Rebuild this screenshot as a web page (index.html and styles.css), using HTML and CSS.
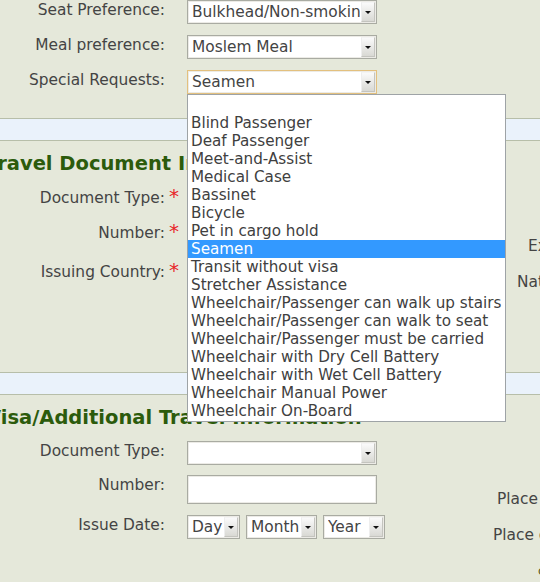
FILE: index.html
```html
<!DOCTYPE html>
<html>
<head>
<meta charset="utf-8">
<link rel="stylesheet" href="styles.css">
</head>
<body>
<div class="page">
  <div class="sec-top">
    <div class="row">
      <div class="lbl">Seat Preference:</div><div class="req"></div>
      <div class="sel w-full"><span class="val">Bulkhead/Non-smoking Room</span><span class="arr"></span></div>
    </div>
    <div class="row">
      <div class="lbl">Meal preference:</div><div class="req"></div>
      <div class="sel w-full"><span class="val">Moslem Meal</span><span class="arr"></span></div>
    </div>
    <div class="row">
      <div class="lbl">Special Requests:</div><div class="req"></div>
      <div class="sel w-full focus"><span class="val">Seamen</span><span class="arr"></span></div>
    </div>
  </div>

  <div class="band"></div>
  <h2 class="head">Travel Document Information</h2>
  <div class="cols cols-doc">
    <div class="left">
      <div class="row">
        <div class="lbl">Document Type:</div><div class="req">*</div>
        <div class="sel w-full"><span class="val"></span><span class="arr"></span></div>
      </div>
      <div class="row">
        <div class="lbl">Number:</div><div class="req">*</div>
        <div class="inp w-full"></div>
      </div>
      <div class="row tall">
        <div class="lbl">Issuing Country:</div><div class="req">*</div>
        <div class="sel w-full"><span class="val"></span><span class="arr"></span></div>
      </div>
    </div>
    <div class="right">
      <div class="rl rl-ex">Expiry Date:</div>
      <div class="rl rl-nat">Nationality:</div>
    </div>
  </div>

  <div class="band band-2"></div>
  <h2 class="head">Visa/Additional Travel Information</h2>
  <div class="cols">
    <div class="left">
      <div class="row">
        <div class="lbl">Document Type:</div><div class="req"></div>
        <div class="sel w-full"><span class="val"></span><span class="arr"></span></div>
      </div>
      <div class="row row-inp">
        <div class="lbl">Number:</div><div class="req"></div>
        <div class="inp w-full"></div>
      </div>
      <div class="row">
        <div class="lbl">Issue Date:</div><div class="req"></div>
        <div class="dates">
          <div class="sel w-day"><span class="val">Day</span><span class="arr"></span></div>
          <div class="sel w-month"><span class="val">Month</span><span class="arr"></span></div>
          <div class="sel w-year"><span class="val">Year</span><span class="arr"></span></div>
        </div>
      </div>
    </div>
    <div class="right">
      <div class="rl rl-place">Place of Issue:</div>
      <div class="rl rl-place2">Place of Birth:</div>
      <div class="rl rl-last">c</div>
    </div>
  </div>

  <ul class="dropdown">
    <li>&nbsp;</li>
    <li>Blind Passenger</li>
    <li>Deaf Passenger</li>
    <li>Meet-and-Assist</li>
    <li>Medical Case</li>
    <li>Bassinet</li>
    <li>Bicycle</li>
    <li>Pet in cargo hold</li>
    <li class="hl">Seamen</li>
    <li>Transit without visa</li>
    <li>Stretcher Assistance</li>
    <li>Wheelchair/Passenger can walk up stairs</li>
    <li>Wheelchair/Passenger can walk to seat</li>
    <li>Wheelchair/Passenger must be carried</li>
    <li>Wheelchair with Dry Cell Battery</li>
    <li>Wheelchair with Wet Cell Battery</li>
    <li>Wheelchair Manual Power</li>
    <li>Wheelchair On-Board</li>
  </ul>
</div>
</body>
</html>
```

FILE: styles.css
```css
html, body {
  margin: 0;
  padding: 0;
  background: #e5e8da;
}
.page {
  position: relative;
  width: 540px;
  height: 582px;
  overflow: hidden;
  font-family: "DejaVu Sans", Verdana, sans-serif;
  font-size: 15.4px;
  color: #444;
}
.sec-top {
  margin-top: -6px;
}
.row {
  display: flex;
  align-items: center;
  height: 35px;
}
.row.tall {
  height: 43px;
}
.row-inp {
  height: 39px;
}
.lbl {
  width: 165px;
  flex: none;
  text-align: right;
  white-space: nowrap;
  padding-bottom: 4px;
}
.row-inp .lbl {
  padding-bottom: 9px;
}
.req {
  width: 22px;
  flex: none;
  box-sizing: border-box;
  padding-left: 4px;
  color: #e8252a;
  font-size: 20px;
  font-weight: normal;
  line-height: 1;
  padding-bottom: 8px;
}
.sel {
  box-sizing: border-box;
  height: 24px;
  background: #fff;
  border: 1px solid #a9aba2;
  box-shadow: inset 0 0 0 1px #ecebe6;
  display: flex;
  align-items: center;
  padding-left: 4px;
  position: relative;
  flex: none;
}
.sel.focus {
  border-color: #e3c07e;
}
.val {
  flex: 1;
  overflow: hidden;
  white-space: nowrap;
  line-height: 20px;
  margin-right: 1px;
}
.arr {
  flex: none;
  width: 14px;
  height: 20px;
  margin-right: 1px;
  box-sizing: border-box;
  background: linear-gradient(#fafafa, #d9d9d4);
  border: 1px solid #c4c4bf;
  border-top-color: #f4f4f4;
  border-left-color: #eeeeee;
  position: relative;
}
.arr::after {
  content: "";
  position: absolute;
  left: 3px;
  top: 8px;
  border-left: 3px solid transparent;
  border-right: 3px solid transparent;
  border-top: 3px solid #111;
}
.w-full { width: 190px; }
.w-day { width: 53px; }
.w-month { width: 71px; }
.w-year { width: 62px; }
.dates {
  display: flex;
  gap: 6px;
}
.inp {
  box-sizing: border-box;
  height: 29px;
  background: #fff;
  border: 1px solid #a9aba2;
  box-shadow: inset 0 0 0 1px #ecebe6;
  flex: none;
}
.band {
  margin-top: 19px;
  height: 21px;
  background: #eaf2fb;
  border-top: 1px solid #b7bea9;
  border-bottom: 1px solid #b7bea9;
}
.band-2 {
  margin-top: 0;
}
.head {
  margin: 0 0 0 -14px;
  height: 41px;
  box-sizing: border-box;
  padding-top: 11px;
  font-size: 19.5px;
  line-height: 24px;
  font-weight: bold;
  color: #2c5b0c;
  white-space: nowrap;
}
.band-2 + .head {
  height: 40px;
}
.cols {
  display: flex;
}
.cols-doc {
  height: 190px;
}
.left {
  flex: none;
  width: 400px;
}
.right {
  flex: 1;
  white-space: nowrap;
}
.rl {
  height: 36px;
  line-height: 36px;
}
.rl-ex {
  margin-top: 46px;
  padding-left: 128px;
}
.rl-nat {
  padding-left: 117px;
}
.rl-place {
  margin-top: 46px;
  padding-left: 97px;
}
.rl-place2 {
  padding-left: 93px;
}
.rl-last {
  padding-left: 138px;
  color: #5a5a20;
  font-size: 12px;
}
.dropdown {
  position: absolute;
  left: 187px;
  top: 94px;
  width: 319px;
  box-sizing: border-box;
  margin: 0;
  padding: 1px 0 1px 0;
  list-style: none;
  background: #fff;
  border: 1px solid #9ea3a6;
  color: #404040;
  font-size: 15.2px;
}
.dropdown li {
  height: 18px;
  line-height: 18px;
  padding-left: 3px;
  white-space: nowrap;
}
.dropdown li.hl {
  background: #3399ff;
  color: #fff;
}
```
